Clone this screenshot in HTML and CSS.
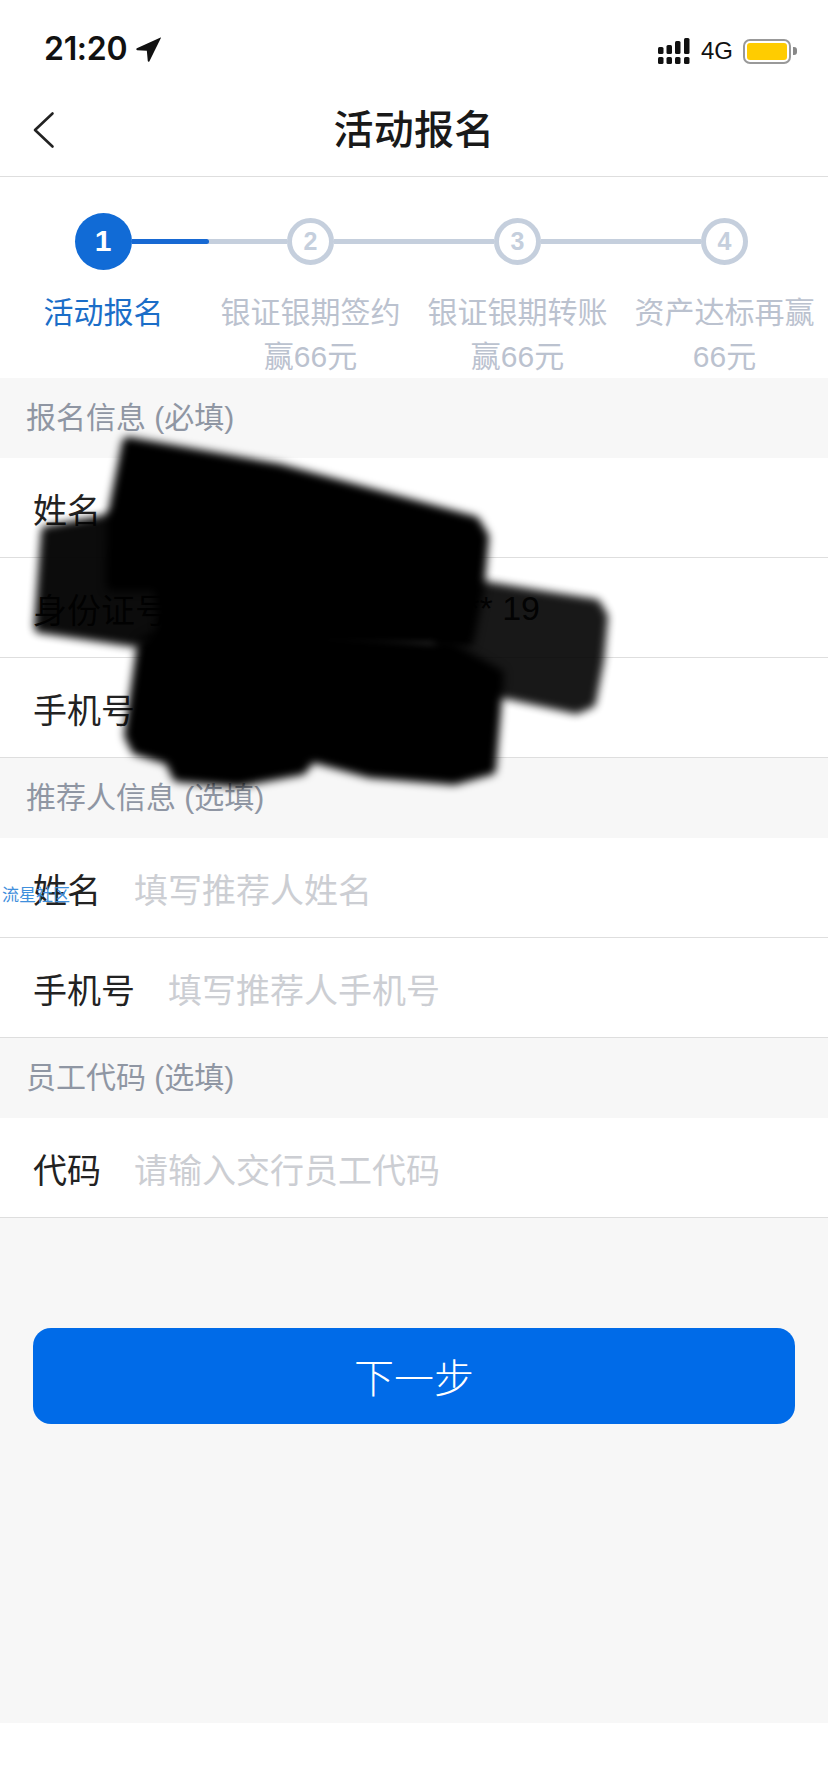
FILE: index.html
```html
<!DOCTYPE html>
<html lang="zh-CN">
<head>
<meta charset="utf-8">
<title>活动报名</title>
<link rel="stylesheet" href="styles.css">
</head>
<body>
<div class="page">
  <header class="statusbar">
    <div class="status-left">
      <span class="time">21:20</span>
      <svg class="loc" viewBox="0 0 24 24"><path d="M23.6 0.4 0.8 10.9c-.9.5-.6 1.6.3 1.7l9.3.6.9 9.8c.1.9 1.2 1.1 1.6.3L23.9 1c.2-.4 0-.7-.3-.6z"/></svg>
    </div>
    <div class="status-right">
      <svg class="signal" viewBox="0 0 34 27"><g fill="#111">
        <rect x="1" y="9" width="5.5" height="7" rx="1.5"/><rect x="9.5" y="7" width="5.5" height="9" rx="1.5"/><rect x="18" y="3" width="5.5" height="13" rx="1.5"/><rect x="27" y="0" width="5.5" height="16" rx="1.5"/>
        <rect x="1" y="19" width="5.5" height="7" rx="1.5"/><rect x="9.5" y="19" width="5.5" height="7" rx="1.5"/><rect x="18" y="19" width="5.5" height="7" rx="1.5"/><rect x="27" y="19" width="5.5" height="7" rx="1.5"/>
      </g></svg>
      <span class="net">4G</span>
      <div class="battery"><div class="battery-fill"></div></div>
      <div class="battery-nub"></div>
    </div>
  </header>
  <nav class="navbar">
    <svg class="back" viewBox="0 0 24 40"><path d="M20.5 3.5 3 20l17.5 16.5"/></svg>
    <h1 class="title">活动报名</h1>
  </nav>
  <section class="steps">
    <div class="step">
      <div class="track"><span class="line line-none"></span><span class="dot dot-on">1</span><span class="line line-on"></span></div>
      <div class="label label-on">活动报名</div>
    </div>
    <div class="step">
      <div class="track"><span class="line"></span><span class="dot">2</span><span class="line"></span></div>
      <div class="label">银证银期签约<br>赢66元</div>
    </div>
    <div class="step">
      <div class="track"><span class="line"></span><span class="dot">3</span><span class="line"></span></div>
      <div class="label">银证银期转账<br>赢66元</div>
    </div>
    <div class="step">
      <div class="track"><span class="line"></span><span class="dot">4</span><span class="line line-none"></span></div>
      <div class="label">资产达标再赢<br>66元</div>
    </div>
  </section>
  <div class="sec">报名信息 (必填)</div>
  <div class="row"><span class="key">姓名</span></div>
  <div class="row"><span class="key">身份证号</span><span class="val">**** **** **** **** 19</span></div>
  <div class="row"><span class="key">手机号</span></div>
  <div class="sec">推荐人信息 (选填)</div>
  <div class="row"><span class="key">姓名</span><span class="ph">填写推荐人姓名</span></div>
  <div class="row"><span class="key">手机号</span><span class="ph">填写推荐人手机号</span></div>
  <div class="sec">员工代码 (选填)</div>
  <div class="row"><span class="key">代码</span><span class="ph">请输入交行员工代码</span></div>
  <main class="action"><button class="next">下一步</button></main>
  <footer class="foot"></footer>
  <div class="mark">流星社区</div>
  <svg class="scribble" viewBox="0 0 828 1792">
    <polygon class="s3" points="440,585 483,587 550,598 595,605 602,617 598,660 590,702 576,708 507,693 440,685"/>
    <polygon class="s2" points="47,532 120,518 300,560 300,636 135,641 40,627"/>
    <polygon class="s1" points="128,443 280,470 474,522 483,537 478,590 468,640 165,640 160,585 112,585 113,518"/>
    <polygon class="s1" points="143,644 175,628 450,648 498,675 490,769 454,779 370,772 311,756 301,769 238,781 178,776 170,759 137,749 130,735"/>
  </svg>
</div>
</body>
</html>
```
FILE: styles.css
```css
* { box-sizing: border-box; }
html, body { margin: 0; padding: 0; }
body {
  font-family: "Liberation Sans", "Noto Sans CJK SC", sans-serif;
  background: #fff;
  color: #222;
}
.page {
  position: relative;
  width: 828px;
  height: 1792px;
  display: flex;
  flex-direction: column;
  overflow: hidden;
  background: #fff;
}
.statusbar {
  height: 88px;
  padding: 31px 31px 0 44px;
  display: flex;
  justify-content: space-between;
  align-items: flex-start;
}
.status-left { display: flex; align-items: center; gap: 9px; height: 36px; }
.time {
  font-family: Inter, "Liberation Sans", sans-serif;
  font-size: 32px;
  font-weight: 600;
  line-height: 36px;
  color: #111;
  letter-spacing: -0.3px;
}
.loc { width: 25px; height: 25px; fill: #111; }
.status-right { display: flex; align-items: center; height: 34px; margin-top: 3px; }
.signal { width: 34px; height: 27px; margin-right: 10px; }
.net { font-size: 24px; line-height: 26px; color: #111; margin-right: 10px; }
.battery {
  width: 48px;
  height: 25px;
  border: 2px solid #999;
  border-radius: 7px;
  padding: 2px;
}
.battery-fill { width: 40px; height: 17px; background: #fc0; border-radius: 3px; }
.battery-nub {
  width: 4px;
  height: 8px;
  margin-left: 2px;
  background: #888;
  border-radius: 0 3px 3px 0;
}
.navbar {
  height: 89px;
  border-bottom: 1.5px solid #dedede;
  display: flex;
  align-items: center;
  justify-content: center;
  position: relative;
  padding-bottom: 4px;
}
.back {
  position: absolute;
  left: 32px;
  top: 22px;
  width: 24px;
  height: 40px;
  fill: none;
  stroke: #222;
  stroke-width: 2.6;
  stroke-linecap: round;
  stroke-linejoin: round;
}
.title {
  margin: 0;
  font-size: 40px;
  font-weight: 500;
  line-height: 48px;
  letter-spacing: 0.3px;
  color: #191919;
}
.steps {
  display: grid;
  grid-template-columns: repeat(4, 207px);
  padding-top: 35px;
  height: 201px;
}
.step { display: flex; flex-direction: column; }
.track { display: flex; align-items: center; height: 58px; }
.line { flex: 1; height: 5px; background: #c5cfdd; }
.line-none { background: transparent; }
.line-on {
  position: relative;
  z-index: 1;
  margin-right: -2px;
  background: #1769d3;
  border-radius: 0 3px 3px 0;
}
.dot {
  width: 47px;
  height: 47px;
  border: 5px solid #c5cfdd;
  border-radius: 50%;
  display: flex;
  align-items: center;
  justify-content: center;
  font-size: 25px;
  font-weight: 700;
  color: #c5cfdd;
}
.dot-on {
  width: 57px;
  height: 57px;
  margin-left: -3px;
  background: #116bd6;
  border: none;
  color: #fff;
  font-size: 30px;
}
.label {
  margin-top: 21px;
  font-size: 30px;
  line-height: 44px;
  color: #bbc2cf;
  text-align: center;
  white-space: nowrap;
}
.label-on { color: #1b6ec8; }
.sec {
  height: 80px;
  padding: 0 0 7px 26px;
  display: flex;
  align-items: center;
  background: #f7f7f7;
  font-size: 30px;
  color: #8f96a3;
}
.row {
  height: 100px;
  padding: 2px 33px 0;
  border-bottom: 1.5px solid #dedede;
  display: flex;
  align-items: center;
  gap: 33px;
  background: #fff;
  font-size: 34px;
}
.key { color: #222; }
.ph { color: #ccced3; }
.val { width: 338px; text-align: right; white-space: nowrap; color: #222; }
.action {
  height: 505px;
  padding: 110px 33px 0;
  background: #f7f7f7;
}
.next {
  display: block;
  width: 762px;
  height: 96px;
  border: none;
  border-radius: 18px;
  background: #006be8;
  color: #fff;
  font-family: "Liberation Sans", "Noto Sans CJK SC", sans-serif;
  font-size: 40px;
  font-weight: 300;
}
.foot { flex: 1; background: #fff; }
.mark {
  position: absolute;
  left: 2px;
  top: 885px;
  font-size: 17px;
  line-height: 22px;
  color: #3f8fdc;
}
.scribble {
  position: absolute;
  left: 0;
  top: 0;
  width: 828px;
  height: 1792px;
  pointer-events: none;
}
.scribble polygon {
  stroke-linejoin: round;
  stroke-width: 12px;
  filter: blur(4px);
}
.s1 { fill: #000; stroke: #000; }
.s2 { fill: #000; stroke: #000; opacity: 0.95; }
.s3 { fill: #000; stroke: #000; opacity: 0.9; }
```
